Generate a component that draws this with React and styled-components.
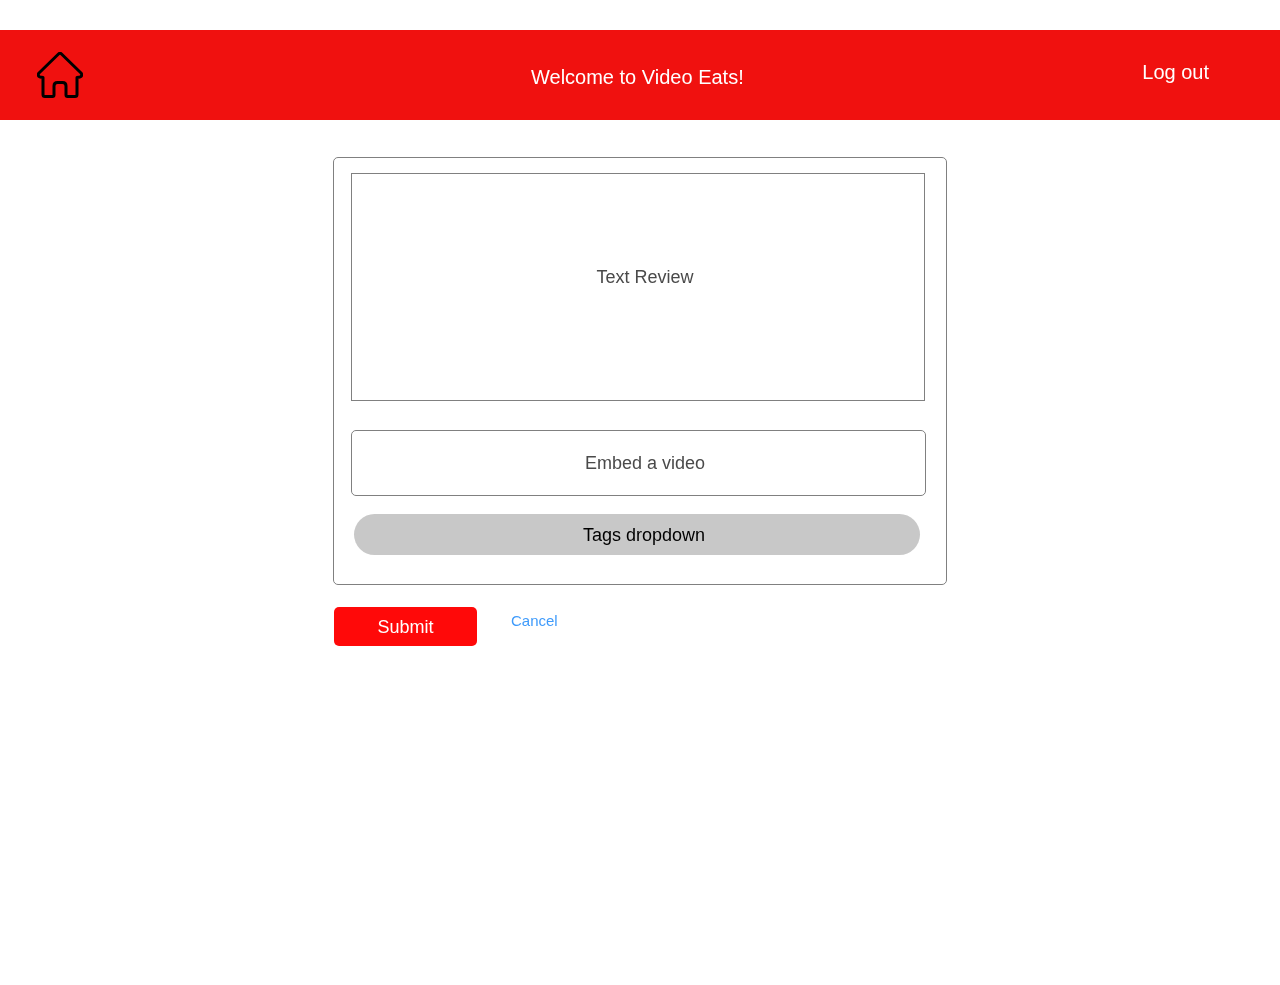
import React from "react";
import styled, {createGlobalStyle} from "styled-components";

const GlobalStyle = createGlobalStyle`
  body {
    margin: 0;
    background-color: white;
    font-family: "Liberation Sans", Arial, sans-serif;
  }
`;

// own layer, so the text is drawn with greyscale smoothing
const Page = styled.div`
  padding-top: 30px;
  min-height: 955px;
  will-change: transform;
`;

const Header = styled.header`
  height: 90px;
  background-color: #f0110f;
  color: white;
  display: grid;
  grid-template-columns: 1fr 1fr;
  position: relative;
`;

const HomeLink = styled.a`
  display: block;
  width: 46px;
  height: 46px;
  margin: 22px 0 0 37px;
`;

const Welcome = styled.div`
  position: absolute;
  left: 531px;
  top: 36px;
  font-size: 20px;
  line-height: 23px;
`;

const LogOut = styled.a`
  justify-self: end;
  margin: 31px 71px 0 0;
  font-size: 20px;
  line-height: 23px;
`;

const Main = styled.main`
  width: 614px;
  margin: 37px 0 0 333px;
`;

const Card = styled.div`
  box-sizing: border-box;
  height: 428px;
  border: 1px solid #808080;
  border-radius: 5px;
  padding: 15px 20px 0 17px;
  display: flex;
  flex-direction: column;
`;

const Field = styled.div`
  box-sizing: border-box;
  border: 1px solid #808080;
  color: #4a4a4a;
  font-size: 18px;
  display: flex;
  align-items: center;
  justify-content: center;
`;

const TextReview = styled(Field)`
  width: 574px;
  height: 228px;
  padding: 0 0 20px 14px;
`;

const EmbedVideo = styled(Field)`
  width: 575px;
  height: 66px;
  margin-top: 29px;
  border-radius: 5px;
  padding-left: 13px;
`;

const TagsDropdown = styled.div`
  width: 566px;
  height: 41px;
  margin: 18px 0 0 3px;
  border-radius: 21px;
  background-color: #c8c8c8;
  color: black;
  font-size: 18px;
  padding: 2px 0 0 14px;
  box-sizing: border-box;
  display: flex;
  align-items: center;
  justify-content: center;
`;

const Actions = styled.div`
  display: flex;
  align-items: flex-start;
  margin-top: 22px;
  padding-left: 1px;
`;

const SubmitButton = styled.button`
  width: 143px;
  height: 39px;
  padding: 2px 0 0;
  border: none;
  border-radius: 5px;
  background-color: #ff0909;
  color: white;
  font-family: inherit;
  font-size: 18px;
`;

const CancelLink = styled.a`
  margin: 5px 0 0 34px;
  color: #3f9bfb;
  font-size: 15px;
  line-height: 17px;
`;

function HomeIcon() {
  return (
    <svg width="46" height="46" viewBox="0 0 46 46" fill="none">
      <path
        d="M21.5 2 L2 21 Q0 23.5 3 25 L6 25.5 L6 42.5 Q6 44.5 8 44.5 L15.5 44.5 Q17 44.5 17 43 L17 34 Q17 30.5 20.5 30.5 L25.5 30.5 Q29 30.5 29 34 L29 43 Q29 44.5 30.5 44.5 L38 44.5 Q40 44.5 40 42.5 L40 25.5 L43 25 Q46 23.5 44 21 L24.5 2 Q23 0.5 21.5 2 Z"
        stroke="black"
        strokeWidth="3"
        strokeLinejoin="round"
      />
    </svg>
  );
}

export default function App() {
  return (
    <Page>
      <GlobalStyle />
      <Header>
        <HomeLink>
          <HomeIcon />
        </HomeLink>
        <Welcome>Welcome to Video Eats!</Welcome>
        <LogOut>Log out</LogOut>
      </Header>
      <Main>
        <Card>
          <TextReview>Text Review</TextReview>
          <EmbedVideo>Embed a video</EmbedVideo>
          <TagsDropdown>Tags dropdown</TagsDropdown>
        </Card>
        <Actions>
          <SubmitButton>Submit</SubmitButton>
          <CancelLink>Cancel</CancelLink>
        </Actions>
      </Main>
    </Page>
  );
}
